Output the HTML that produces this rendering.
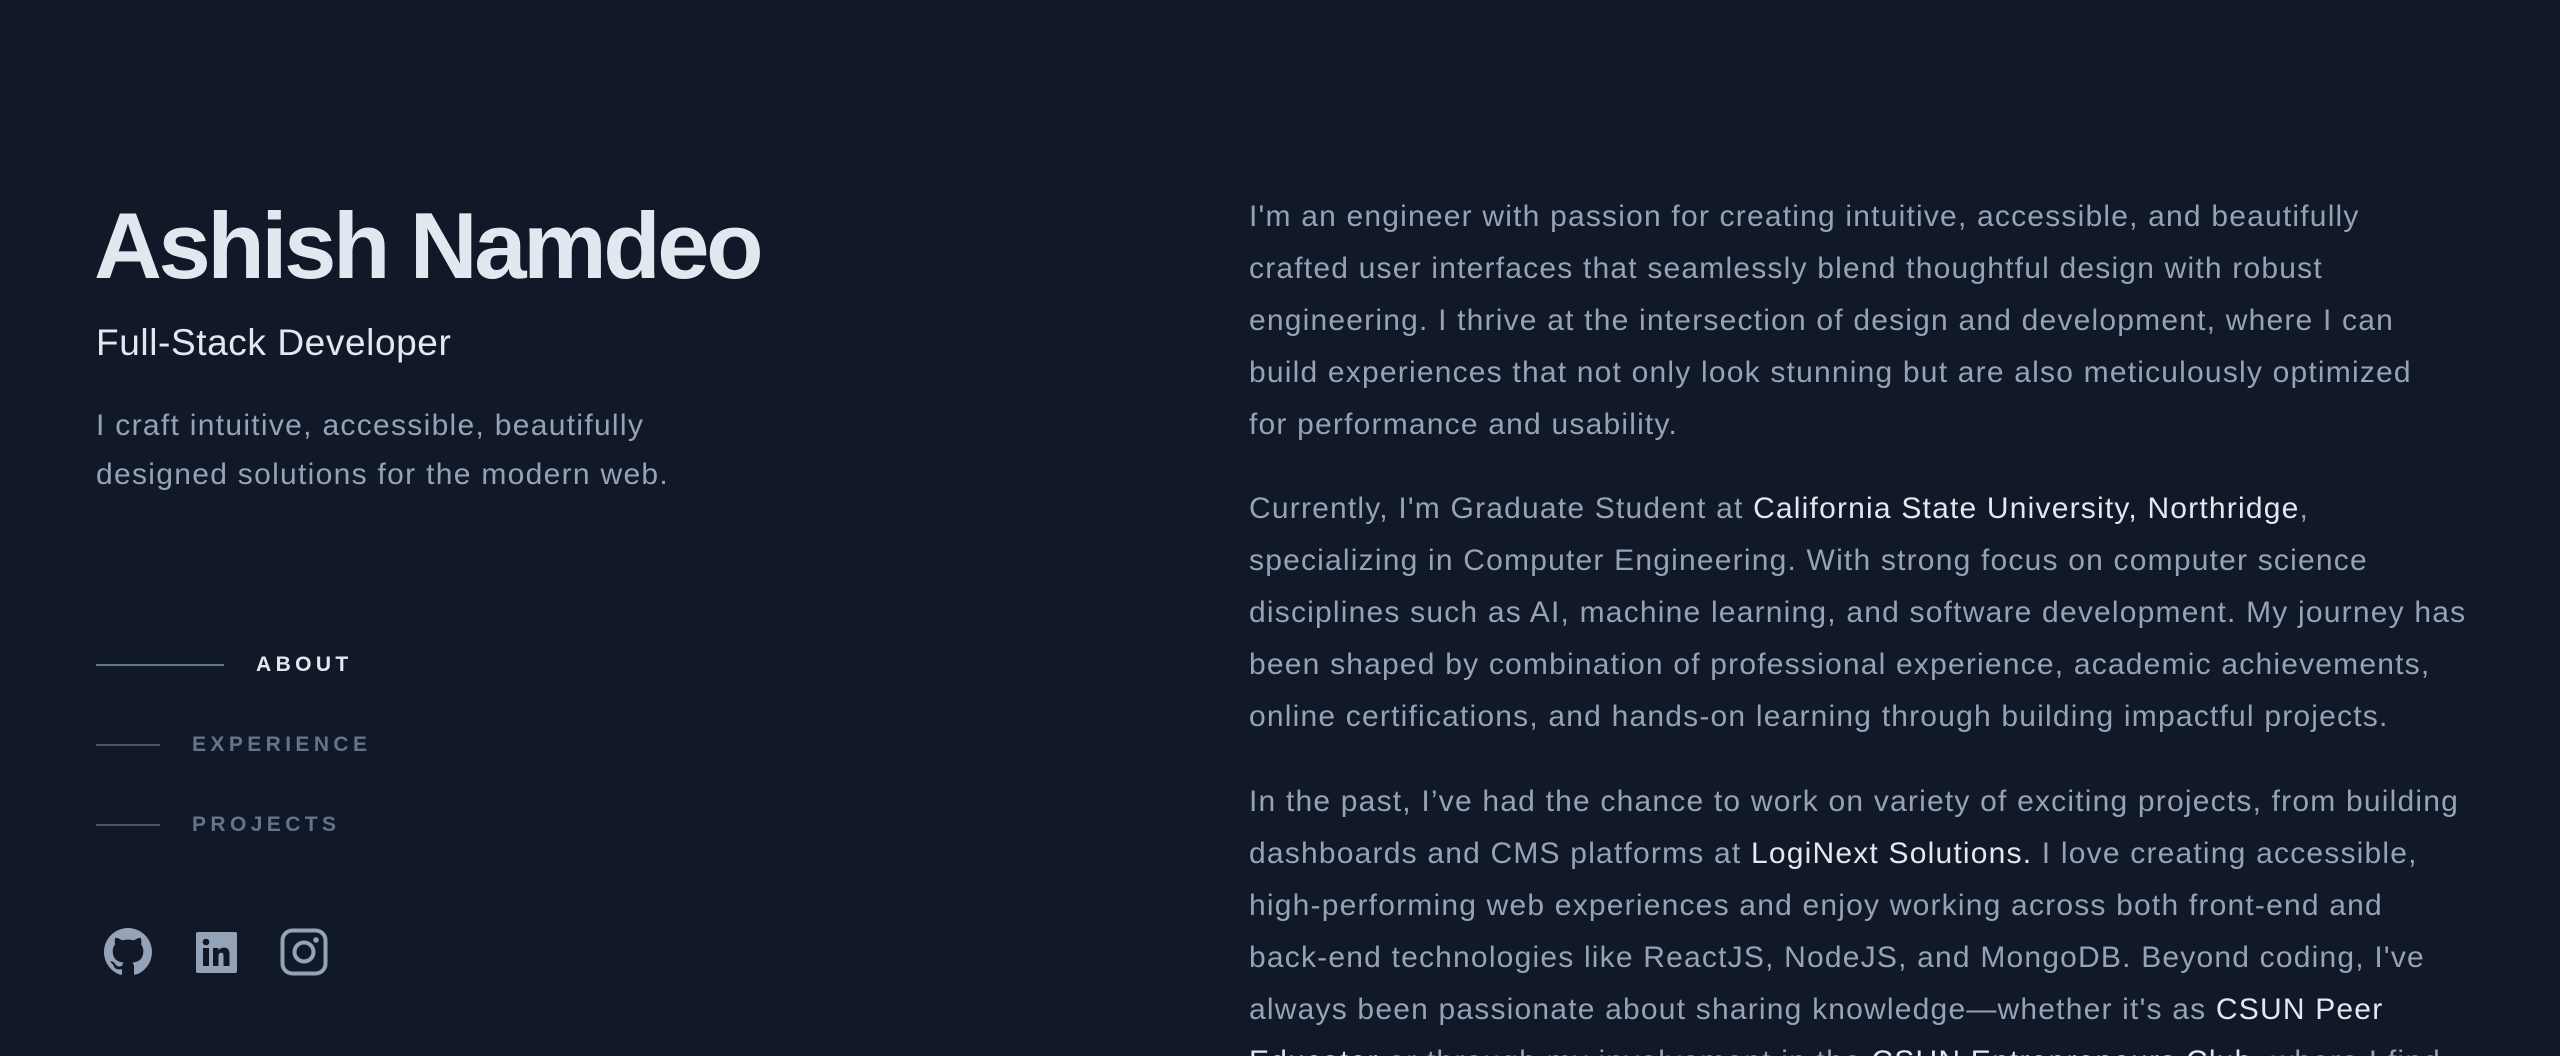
<!DOCTYPE html>
<html><head><meta charset="utf-8"><style>
html,body{margin:0;padding:0;background:#111827;width:2560px;height:1056px;overflow:hidden}
body{font-family:"Liberation Sans",Arial,sans-serif;position:relative}
.a{position:absolute;white-space:nowrap}
.name{left:94px;top:199px;font-size:94px;line-height:1;font-weight:700;color:#e2e8f0;letter-spacing:-3.4px}
.sub{left:96px;top:324px;font-size:37px;line-height:1;color:#e2e8f0;letter-spacing:0.6px}
.tag{left:96px;font-size:30px;line-height:49px;color:#94a3b8;letter-spacing:1.3px}
.nav{left:96px;height:30px;display:flex;align-items:center;font-size:21px;font-weight:700;letter-spacing:4.4px;color:#64748b}
.nav i{display:block;height:2px;background:#475569;margin-right:32px}
.r{left:1249px;font-size:30px;line-height:52px;height:52px;color:#94a3b8;letter-spacing:1.2px}
.r b{font-weight:400;color:#e2e8f0}
</style></head><body>
<div class="a name">Ashish Namdeo</div>
<div class="a sub">Full-Stack Developer</div>
<div class="a tag" style="top:401px">I craft intuitive, accessible, beautifully</div>
<div class="a tag" style="top:450px">designed solutions for the modern web.</div>

<div class="a nav" style="top:650px;color:#e2e8f0"><i style="width:128px;background:#64748b"></i>ABOUT</div>
<div class="a nav" style="top:730px"><i style="width:64px"></i>EXPERIENCE</div>
<div class="a nav" style="top:810px"><i style="width:64px"></i>PROJECTS</div>

<svg class="a" style="left:104px;top:928px" width="48" height="48" viewBox="0 0 16 16"><path fill="#94a3b8" d="M8 0C3.58 0 0 3.58 0 8c0 3.540 2.29 6.53 5.47 7.59.4.07.55-.17.55-.38 0-.19-.01-.82-.01-1.490-2.01.37-2.530-.49-2.690-.94-.09-.23-.48-.94-.82-1.130-.28-.15-.68-.52-.01-.53.63-.01 1.080.58 1.230.82.72 1.210 1.870.87 2.330.66.07-.52.28-.87.51-1.070-1.780-.2-3.640-.89-3.640-3.950 0-.87.31-1.590.82-2.150-.08-.2-.36-1.020.08-2.120 0 0 .67-.21 2.200.82.64-.18 1.320-.27 2-.27.68 0 1.360.09 2 .27 1.530-1.040 2.200-.82 2.200-.82.44 1.100.16 1.920.08 2.120.51.56.82 1.270.82 2.150 0 3.070-1.870 3.750-3.650 3.950.29.25.54.73.54 1.480 0 1.070-.01 1.930-.01 2.200 0 .21.15.46.55.38A8.013 8.013 0 0016 8c0-4.420-3.580-8-8-8z"/></svg>
<svg class="a" style="left:196px;top:932px" width="41" height="41" viewBox="0 0 41 41"><rect width="41" height="41" rx="2" fill="#94a3b8"/><circle cx="10" cy="10" r="3.3" fill="#111827"/><rect x="7" y="16" width="6" height="18" fill="#111827"/><path d="M17 16h5.5v2.6c1-1.8 3-3 5.5-3 4.5 0 5.5 3 5.5 7V34h-6V24c0-2-.5-3.3-2.3-3.3-2 0-2.7 1.5-2.7 3.3V34H17z" fill="#111827"/></svg>
<svg class="a" style="left:280px;top:928px" width="48" height="48" viewBox="0 0 48 48"><rect x="2.5" y="2.5" width="43" height="43" rx="10" fill="none" stroke="#94a3b8" stroke-width="4"/><circle cx="24" cy="24" r="9.5" fill="none" stroke="#94a3b8" stroke-width="4"/><circle cx="36" cy="12" r="2.8" fill="#94a3b8"/></svg>

<div class="a r" style="top:191px">I'm an engineer with passion for creating intuitive, accessible, and beautifully</div>
<div class="a r" style="top:243px">crafted user interfaces that seamlessly blend thoughtful design with robust</div>
<div class="a r" style="top:295px">engineering. I thrive at the intersection of design and development, where I can</div>
<div class="a r" style="top:347px">build experiences that not only look stunning but are also meticulously optimized</div>
<div class="a r" style="top:399px">for performance and usability.</div>

<div class="a r" style="top:483px">Currently, I'm Graduate Student at <b>California State University, Northridge</b>,</div>
<div class="a r" style="top:535px">specializing in Computer Engineering. With strong focus on computer science</div>
<div class="a r" style="top:587px">disciplines such as AI, machine learning, and software development. My journey has</div>
<div class="a r" style="top:639px">been shaped by combination of professional experience, academic achievements,</div>
<div class="a r" style="top:691px">online certifications, and hands-on learning through building impactful projects.</div>

<div class="a r" style="top:776px">In the past, I’ve had the chance to work on variety of exciting projects, from building</div>
<div class="a r" style="top:828px">dashboards and CMS platforms at <b>LogiNext Solutions.</b> I love creating accessible,</div>
<div class="a r" style="top:880px">high-performing web experiences and enjoy working across both front-end and</div>
<div class="a r" style="top:932px">back-end technologies like ReactJS, NodeJS, and MongoDB. Beyond coding, I've</div>
<div class="a r" style="top:984px">always been passionate about sharing knowledge—whether it's as <b>CSUN Peer</b></div>
<div class="a r" style="top:1036px"><b>Educator</b> or through my involvement in the <b>CSUN Entrepreneurs Club</b>, where I find</div>
</body></html>
